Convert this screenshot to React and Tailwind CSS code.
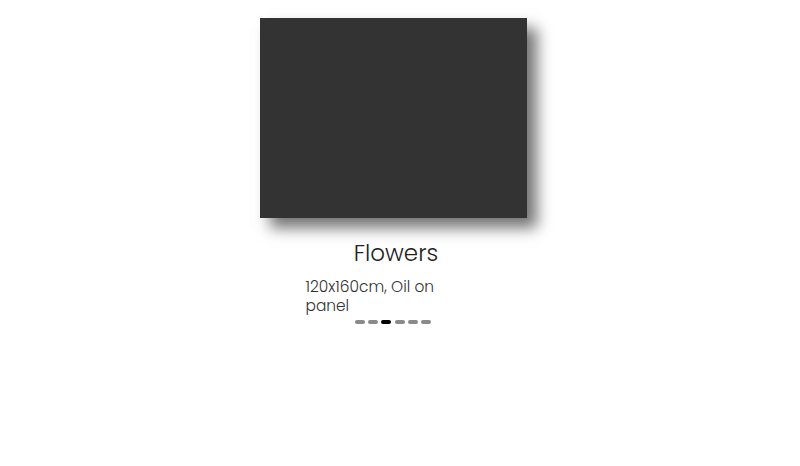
import React, { useState } from 'react';

const slides = [
    { title: 'Sunset', info: '100x80cm, Oil on canvas' },
    { title: 'Harbour', info: '90x120cm, Acrylic' },
    { title: 'Flowers', info: '120x160cm, Oil on panel' },
    { title: 'Portrait', info: '60x80cm, Oil on canvas' },
    { title: 'Forest', info: '140x100cm, Tempera' },
    { title: 'Still life', info: '50x70cm, Oil on panel' },
];

const App = () => {
    const [current, setCurrent] = useState(2);
    const slide = slides[current];

    return (
        <div className="min-h-screen bg-white pt-[18px] pr-[14px] font-['Poppins','Inter',sans-serif]">
            <div className="w-[267px] mx-auto">
                <div className="w-[267px] h-[200px] bg-[#333333] shadow-[10px_10px_14px_rgba(0,0,0,0.55)]" />
            </div>
            <div className="w-[267px] mx-auto flex flex-col items-center">
                <h2 className="mt-[20px] text-[23px] leading-[30px] font-light text-[#222] pl-[6px]">
                    {slide.title}
                </h2>
                <p className="mt-[9px] w-[175px] text-[15.4px] leading-[19px] font-light text-[#333]">
                    {slide.info}
                </p>
                <div className="mt-[5px] flex gap-[3.3px]">
                    {slides.map((s, i) => (
                        <button
                            key={s.title}
                            onClick={() => setCurrent(i)}
                            className={i === current ? 'w-[10px] h-[3.5px] rounded-full bg-black' : 'w-[10px] h-[3.5px] rounded-full bg-[#8a8a8a]'}
                        />
                    ))}
                </div>
            </div>
        </div>
    );
};

export default App;
